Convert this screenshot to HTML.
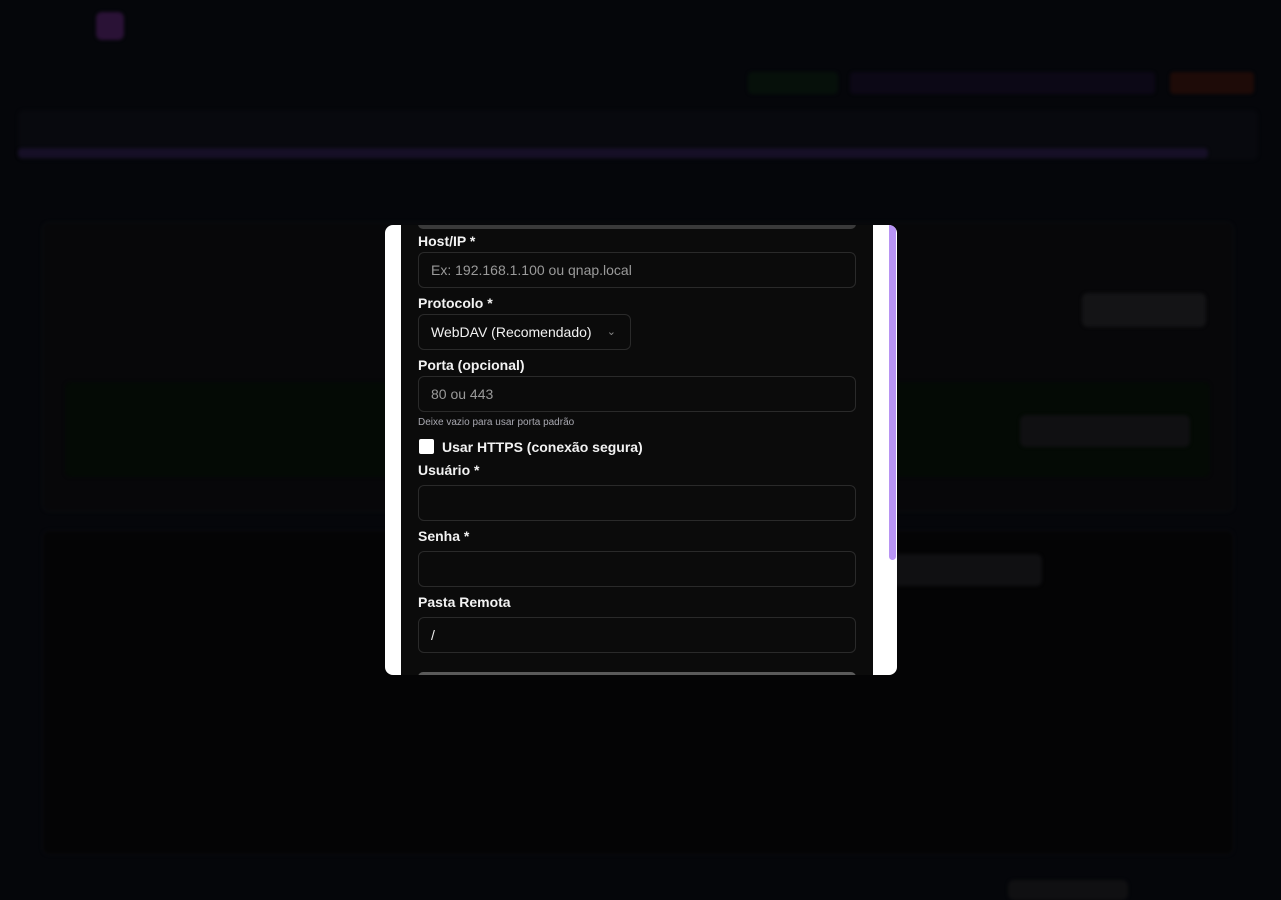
<!DOCTYPE html>
<html><head><meta charset="utf-8"><style>
*{box-sizing:border-box;margin:0;padding:0}
body{width:1281px;height:900px;overflow:hidden;background:#05060a;font-family:"Liberation Sans",sans-serif;position:relative}
.bg{position:absolute;filter:blur(1.5px)}
.modal{position:absolute;left:385px;top:225px;width:512px;height:450px;background:#fff;border-radius:8px;overflow:hidden}
.inner{position:absolute;left:16px;top:0;width:472px;height:450px;background:#0b0b0b}
.sb{position:absolute;left:504px;top:0;width:7px;height:335px;background:#b894f4;border-radius:0 0 4px 4px}
.lbl{position:absolute;left:17px;color:#f2f2f2;font-size:14px;font-weight:bold}
.inp{position:absolute;left:17px;width:438px;height:36px;border:1px solid #2a2a2a;border-radius:6px;background:#0b0b0b;color:#9a9a9a;font-size:14px;padding:0 12px;line-height:34px}
</style></head><body>
<div class="bg" style="left:96px;top:12px;width:28px;height:28px;border-radius:6px;background:#2a1236"></div>
<div class="bg" style="left:1170px;top:72px;width:84px;height:22px;border-radius:4px;background:#1e0b08"></div>
<div class="bg" style="left:850px;top:72px;width:305px;height:22px;border-radius:4px;background:#0c0816"></div>
<div class="bg" style="left:748px;top:72px;width:90px;height:22px;border-radius:4px;background:#06100a"></div>
<div class="bg" style="left:18px;top:110px;width:1240px;height:50px;border-radius:6px;background:#08090e"></div>
<div class="bg" style="left:18px;top:148px;width:1190px;height:10px;border-radius:4px;background:#160f26"></div>
<div class="bg" style="left:42px;top:222px;width:1192px;height:290px;border-radius:8px;background:#070709;border:1px solid #0d0f13"></div>
<div class="bg" style="left:65px;top:382px;width:1145px;height:95px;border-radius:6px;background:#040a05"></div>
<div class="bg" style="left:1082px;top:293px;width:124px;height:34px;border-radius:6px;background:#141416"></div>
<div class="bg" style="left:1020px;top:415px;width:170px;height:32px;border-radius:6px;background:#101012"></div>
<div class="bg" style="left:42px;top:530px;width:1192px;height:325px;border-radius:8px;background:#040405;border:1px solid #0c0e12"></div>
<div class="bg" style="left:890px;top:554px;width:152px;height:32px;border-radius:6px;background:#101012"></div>
<div class="bg" style="left:1008px;top:880px;width:120px;height:20px;border-radius:6px;background:#101012"></div>
<div class="modal">
<div class="inner">
<div style="position:absolute;left:17px;top:-6px;width:438px;height:10px;border-radius:6px;background:#3a3a3a"></div>
<div class="lbl" style="top:8px">Host/IP *</div>
<div class="inp" style="top:27px">Ex: 192.168.1.100 ou qnap.local</div>
<div class="lbl" style="top:70px">Protocolo *</div>
<div class="inp" style="top:89px;width:213px;color:#f2f2f2">WebDAV (Recomendado)<span style="position:absolute;right:14px;top:0;color:#888;font-size:11px">&#8964;</span></div>
<div class="lbl" style="top:132px">Porta (opcional)</div>
<div class="inp" style="top:151px">80 ou 443</div>
<div style="position:absolute;left:17px;top:192px;font-size:10px;color:#a8a8b0">Deixe vazio para usar porta padrão</div>
<div style="position:absolute;left:18px;top:214px;width:15px;height:15px;background:#fff;border-radius:2px"></div>
<div class="lbl" style="top:214px;left:41px">Usar HTTPS (conexão segura)</div>
<div class="lbl" style="top:237px">Usuário *</div>
<div class="inp" style="top:260px"></div>
<div class="lbl" style="top:303px">Senha *</div>
<div class="inp" style="top:326px"></div>
<div class="lbl" style="top:369px">Pasta Remota</div>
<div class="inp" style="top:392px;color:#f2f2f2">/</div>
<div style="position:absolute;left:17px;top:447px;width:438px;height:10px;border-radius:6px;background:#5a5a5a"></div>
</div>
<div class="sb"></div>
</div>
</body></html>
